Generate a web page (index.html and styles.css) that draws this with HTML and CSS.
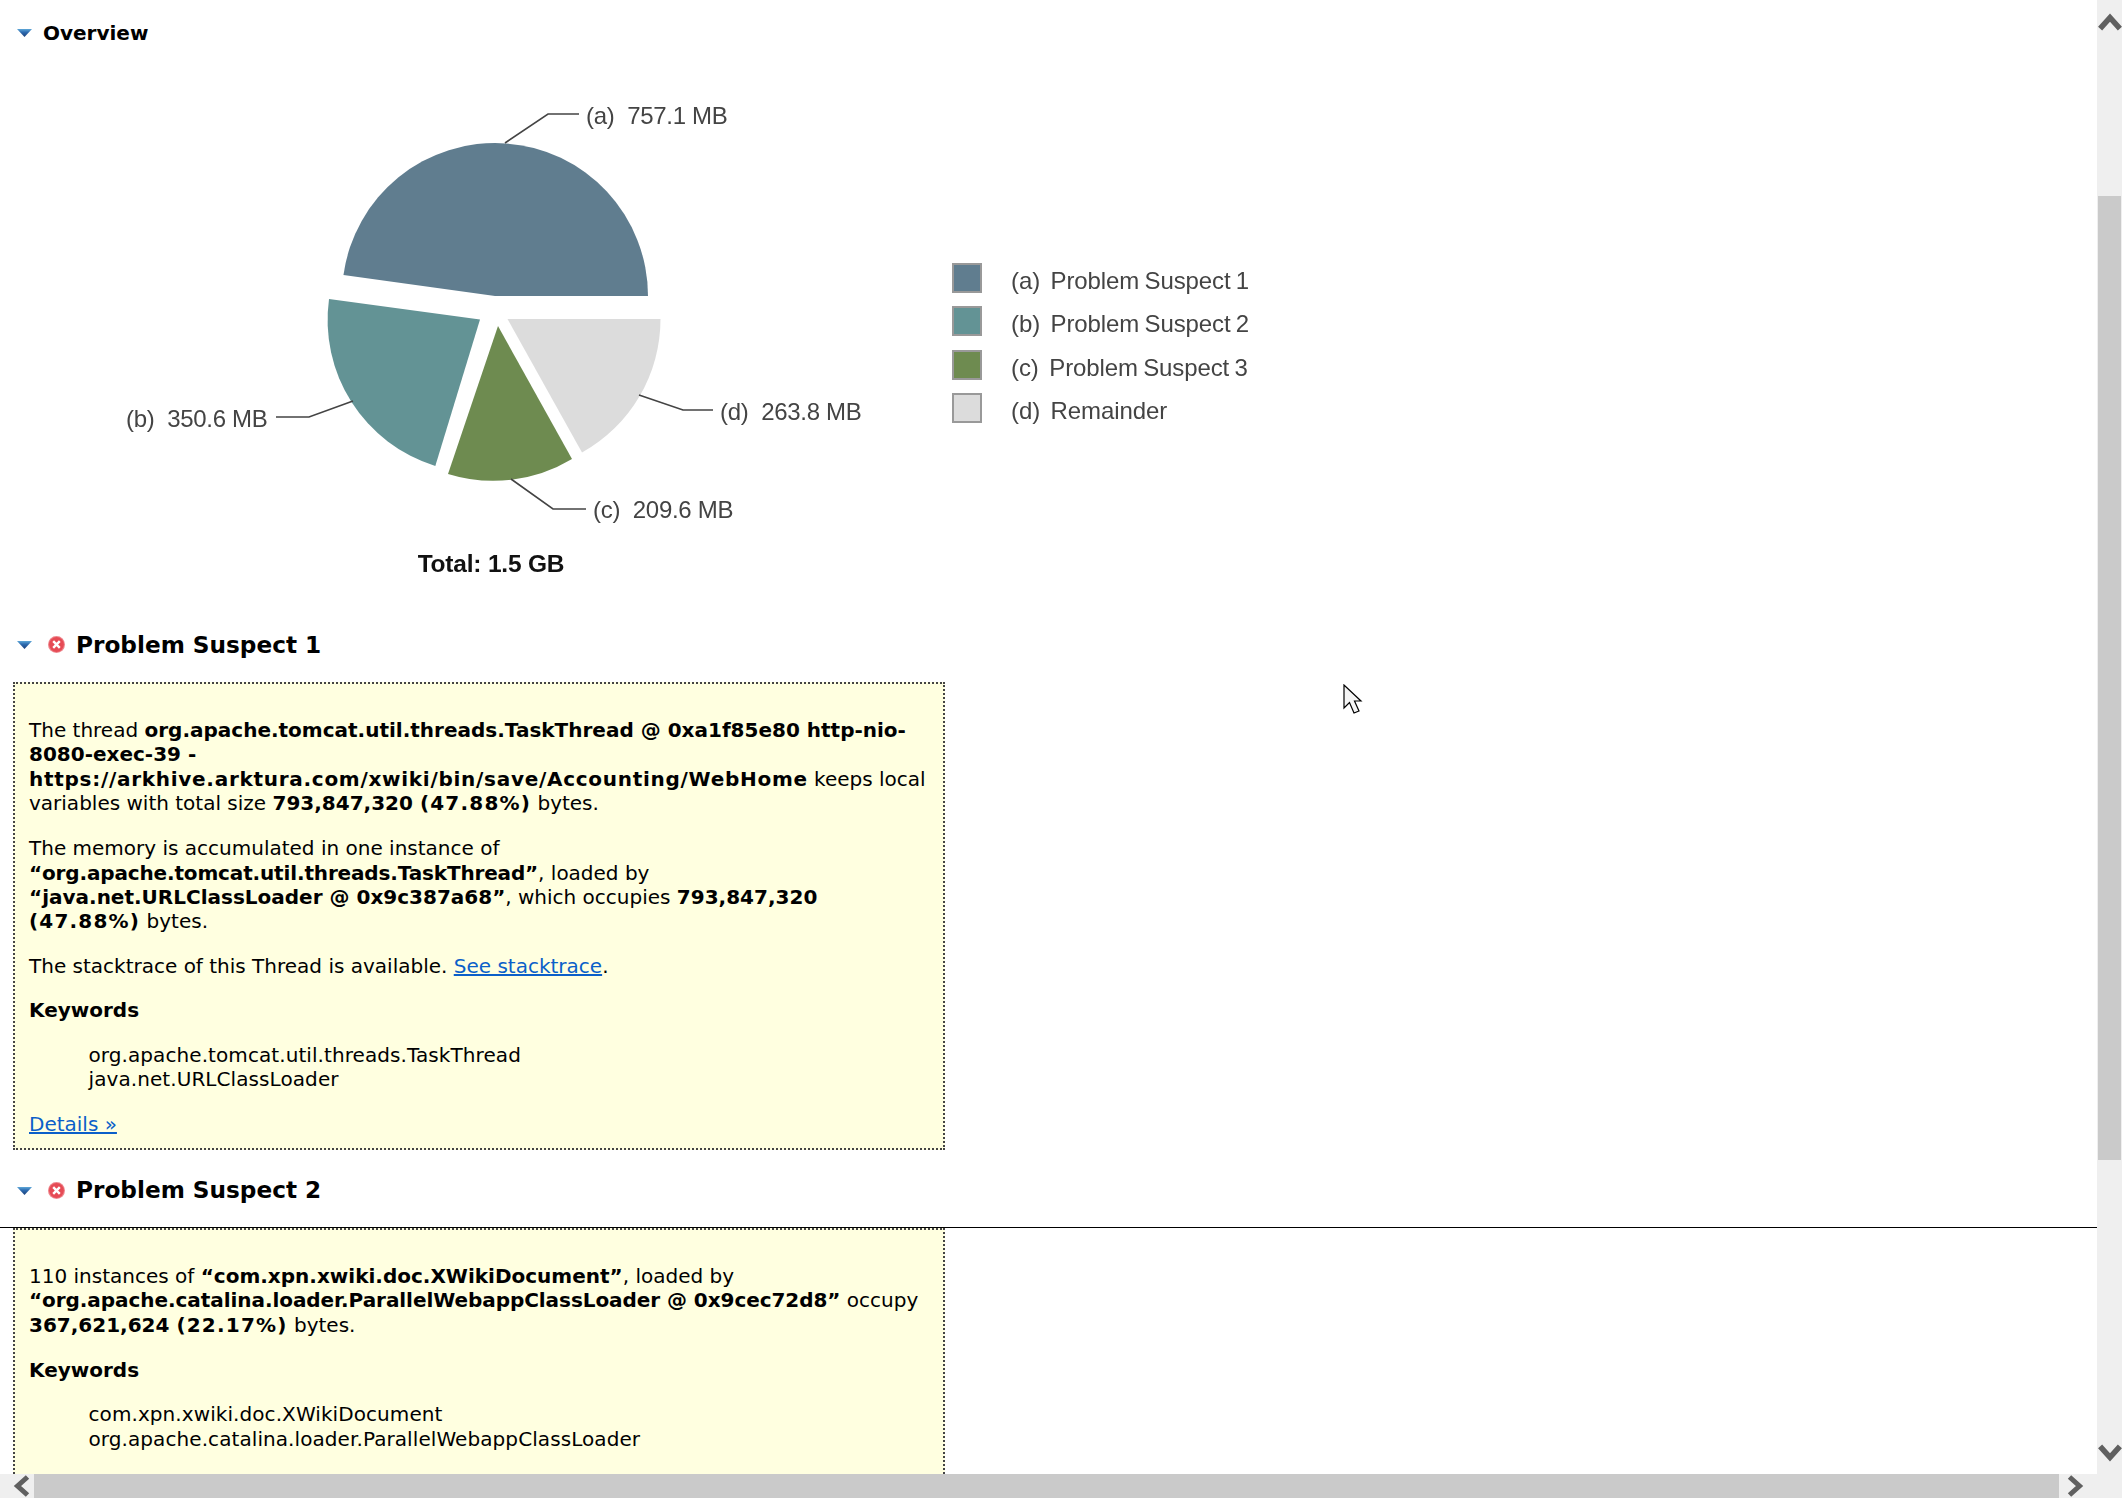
FILE: index.html
```html
<!DOCTYPE html>
<html lang="en">
<head>
<meta charset="utf-8">
<title>Leak Suspects</title>
<link rel="stylesheet" href="styles.css">
</head>
<body>
<div class="viewport">
  <main class="content">
    <h2 class="heading heading-overview">
      <svg class="twisty" viewBox="0 0 15 8"><defs><linearGradient id="tw" x1="0" y1="0" x2="0" y2="1"><stop offset="0" stop-color="#5fa8d8"/><stop offset="0.4" stop-color="#2d6bb0"/><stop offset="1" stop-color="#1c3f7a"/></linearGradient></defs><path d="M0 0H15L7.5 8Z" fill="url(#tw)"/></svg>
      <span>Overview</span>
    </h2>
    <div class="overview">
      <svg class="chart" viewBox="0 54 900 540" width="900" height="540">
        <path d="M495 296 L648 296 A153 153 0 0 0 343.45 275 Z" fill="#607d8f"/>
        <path d="M480 319.4 L329 299 A153 153 0 0 0 435.300 466 Z" fill="#639395"/>
        <path d="M498 326 L448 474 A153 153 0 0 0 572 459 Z" fill="#6e8b50"/>
        <path d="M507.5 319 L582 452.6 A153 153 0 0 0 660.5 319 Z" fill="#dcdcdc"/>
        <polyline class="leader" points="505,143 548,114 579,114"/>
        <polyline class="leader" points="353,401 309,417 276,417"/>
        <polyline class="leader" points="511,479 553,509 586,509"/>
        <polyline class="leader" points="639,395 683,410 713,410"/>
        <text class="label" x="586" y="124">(a)  757.1 MB</text>
        <text class="label" x="126" y="427">(b)  350.6 MB</text>
        <text class="label" x="593" y="518">(c)  209.6 MB</text>
        <text class="label" x="720" y="420">(d)  263.8 MB</text>
        <text class="total" x="491" y="572">Total: 1.5 GB</text>
      </svg>
      <ul class="legend">
        <li class="legend-item"><span class="swatch swatch-a"></span><span class="legend-text">(a)  Problem Suspect 1</span></li>
        <li class="legend-item"><span class="swatch swatch-b"></span><span class="legend-text">(b)  Problem Suspect 2</span></li>
        <li class="legend-item"><span class="swatch swatch-c"></span><span class="legend-text">(c)  Problem Suspect 3</span></li>
        <li class="legend-item"><span class="swatch swatch-d"></span><span class="legend-text">(d)  Remainder</span></li>
      </ul>
    </div>

    <h2 class="heading heading-suspect">
      <svg class="twisty" viewBox="0 0 15 8"><path d="M0 0H15L7.5 8Z" fill="url(#tw)"/></svg>
      <svg class="error" viewBox="0 0 17 17"><circle cx="8.5" cy="8.500" r="8.5" fill="#ee858c"/><circle cx="8.5" cy="8.5" r="7.4" fill="#e64b55"/><path d="M5.2 5.2L11.8 11.8M11.8 5.2L5.2 11.8" stroke="#fff" stroke-width="2.4"/></svg>
      <span>Problem Suspect 1</span>
    </h2>
    <section class="box box-first">
      <p>The thread <b>org.apache.tomcat.util.threads.TaskThread @ 0xa1f85e80 http-nio-8080-exec-39 - <span class="url">https://arkhive.arktura.com/xwiki/bin/save/Accounting/WebHome</span></b> keeps local variables with total size <b>793,847,320 <span class="pct">(47.88%)</span></b> bytes.</p>
      <p>The memory is accumulated in one instance of <b class="quoted">“org.apache.tomcat.util.threads.TaskThread”</b>, loaded by <b>“java.net.URLClassLoader @ 0x9c387a68”</b>, which occupies <b>793,847,320<br><span class="pct">(47.88%)</span></b> bytes.</p>
      <p class="tight">The stacktrace of this Thread is available. <a href="#">See stacktrace</a>.</p>
      <p><b>Keywords</b></p>
      <p class="keywords">org.apache.tomcat.util.threads.TaskThread<br>java.net.URLClassLoader</p>
      <p class="last"><a href="#">Details »</a></p>
    </section>

    <h2 class="heading heading-suspect heading-ruled">
      <svg class="twisty" viewBox="0 0 15 8"><path d="M0 0H15L7.5 8Z" fill="url(#tw)"/></svg>
      <svg class="error" viewBox="0 0 17 17"><circle cx="8.5" cy="8.500" r="8.5" fill="#ee858c"/><circle cx="8.5" cy="8.5" r="7.4" fill="#e64b55"/><path d="M5.2 5.2L11.8 11.8M11.8 5.2L5.2 11.8" stroke="#fff" stroke-width="2.4"/></svg>
      <span>Problem Suspect 2</span>
    </h2>
    <section class="box">
      <p>110 instances of <b>“com.xpn.xwiki.doc.XWikiDocument”</b>, loaded by <b class="quoted-long">“org.apache.catalina.loader.ParallelWebappClassLoader @ 0x9cec72d8”</b> occupy <b>367,621,624 <span class="pct">(22.17%)</span></b> bytes.</p>
      <p><b>Keywords</b></p>
      <p class="keywords">com.xpn.xwiki.doc.XWikiDocument<br>org.apache.catalina.loader.ParallelWebappClassLoader</p>
      <p class="last"><a href="#">Details »</a></p>
    </section>

    <svg class="cursor" viewBox="0 0 20 32"><path d="M1 1V24L6.500 18.500L11 29L16 27L11.500 17H18Z" fill="#f5f5f5" stroke="#000" stroke-width="1.2"/></svg>
  </main>

  <div class="vbar">
    <svg class="arrow" viewBox="0 0 20 16"><path d="M1 14L10 4L19 14" /></svg>
    <div class="vthumb"></div>
    <svg class="arrow" viewBox="0 0 20 16"><path d="M1 2L10 12L19 2" /></svg>
  </div>
  <div class="hbar">
    <svg class="arrow-h" viewBox="0 0 16 20"><path d="M14 1L4 10L14 19" /></svg>
    <div class="hthumb"></div>
    <svg class="arrow-h" viewBox="0 0 16 20"><path d="M2 1L12 10L2 19" /></svg>
  </div>
  <div class="corner"></div>
</div>
</body>
</html>
```

FILE: styles.css
```css
* { box-sizing: border-box; }
html, body { margin: 0; padding: 0; background: #fff; }

.viewport {
  width: 2122px;
  height: 1499px;
  overflow: hidden;
  display: grid;
  grid-template-columns: 2097px 25px;
  grid-template-rows: 1474px 24px;
  background: #fff;
}

.content {
  position: relative;
  overflow: hidden;
  padding-top: 12px;
  font-family: "DejaVu Sans", Verdana, sans-serif;
  font-size: 20px;
  line-height: 24.4px;
  color: #000;
}

.heading {
  margin: 0;
  display: flex;
  align-items: center;
  padding-left: 17px;
  font-weight: bold;
  color: #000;
}
.heading-overview { height: 42px; font-size: 20px; gap: 11px; }
.heading-suspect {
  height: 63px;
  padding-bottom: 10.5px;
  font-size: 23.2px;
  border-bottom: 1px solid transparent;
}
.heading-ruled { border-bottom-color: #000; margin-top: 15px; }

.twisty { width: 15px; height: 8px; flex: none; }
.error { width: 17px; height: 17px; flex: none; margin-left: 16px; margin-right: 11px; }

.overview { display: flex; height: 565px; align-items: flex-start; }
.chart { flex: none; display: block; filter: blur(0.35px); }
.leader { fill: none; stroke: #444; stroke-width: 1.6; }
.label { font-family: "Liberation Sans", Arial, sans-serif; font-size: 24px; fill: #444; white-space: pre; letter-spacing: -0.3px; }
.total { font-family: "Liberation Sans", Arial, sans-serif; font-size: 24.5px; font-weight: bold; fill: #111; text-anchor: middle; letter-spacing: -0.2px; }

.legend {
  list-style: none;
  margin: 209px 0 0 52px;
  padding: 0;
  display: flex;
  flex-direction: column;
  gap: 13.4px;
  font-family: "Liberation Sans", Arial, sans-serif;
  font-size: 24px;
  line-height: 30px;
  color: #444;
  white-space: pre;
  letter-spacing: -0.1px;
  word-spacing: -1.3px;
  filter: blur(0.35px);
}
.legend-item { display: flex; gap: 29px; height: 30px; }
.legend-text { margin-top: 3px; }
.swatch { width: 30px; height: 30px; border: 2px solid #999; flex: none; }
.swatch-a { background: #607d8f; }
.swatch-b { background: #639395; }
.swatch-c { background: #6e8b50; }
.swatch-d { background: #dcdcdc; }

.box {
  width: 932px;
  margin-left: 13px;
  padding: 34px 14px 11.5px;
  background: #ffffe0;
  border: 2px dotted #444;
}
.box p { margin: 0 0 20.5px; }
.box p.tight { margin-bottom: 19px; }
.box p.last { margin-bottom: 0; }
.box .keywords { padding-left: 59.5px; letter-spacing: 0.08px; }
.box a { color: #0b5fc9; }
.url { letter-spacing: 0.72px; }
.pct { letter-spacing: 1.2px; }
.quoted { letter-spacing: -0.15px; }
.quoted-long { letter-spacing: -0.06px; }

.vbar {
  background: #efefef;
  display: flex;
  flex-direction: column;
  align-items: center;
  padding-top: 13px;
}
.arrow { width: 22px; height: 18px; flex: none; overflow: visible; }
.arrow path, .arrow-h path { fill: none; stroke: #606060; stroke-width: 5; }
.vthumb { width: 23px; height: 964px; background: #cacaca; margin: 165px 0 284px; flex: none; }

.hbar { background: #efefef; display: flex; align-items: center; padding-left: 13px; }
.arrow-h { width: 17px; height: 20px; flex: none; overflow: visible; }
.hthumb { width: 2025px; height: 24px; background: #cacaca; margin: 0 8px 0 4px; flex: none; }
.corner { background: #efefef; }

.cursor { position: absolute; left: 1343px; top: 684px; width: 20px; height: 32px; }
```
